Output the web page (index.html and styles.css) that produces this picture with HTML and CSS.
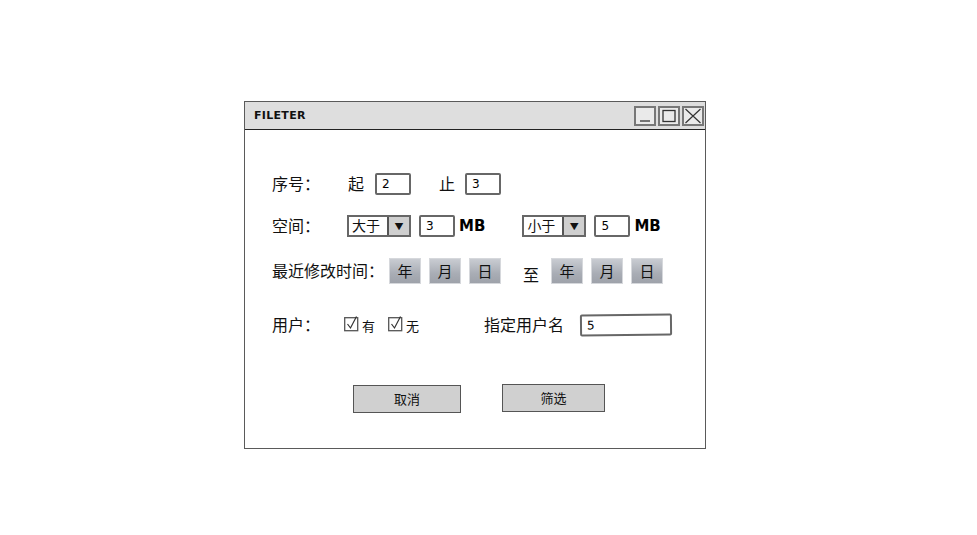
FILE: index.html
```html
<!DOCTYPE html>
<html lang="zh">
<head>
<meta charset="utf-8">
<title>FILETER</title>
<link rel="stylesheet" href="styles.css">
</head>
<body>
<div class="window">
  <div class="titlebar">
    <span class="title">FILETER</span>
    <div class="controls">
      <span class="ctl"><svg width="18" height="16" viewBox="0 0 18 16"><line x1="4" y1="13" x2="14" y2="13" stroke="#333" stroke-width="1.3"/></svg></span>
      <span class="ctl"><svg width="18" height="16" viewBox="0 0 18 16"><rect x="3" y="2.5" width="12" height="11" fill="none" stroke="#333" stroke-width="1.3"/></svg></span>
      <span class="ctl"><svg width="18" height="16" viewBox="0 0 18 16"><path d="M1.5 1 L16.5 15 M16.5 1 L1.5 15" stroke="#333" stroke-width="1.2" fill="none"/></svg></span>
    </div>
  </div>
  <div class="content">
    <div class="row row1">
      <span class="label w76">序号：</span>
      <span class="txt">起</span>
      <span class="input w36 ml11">2</span>
      <span class="txt ml28">止</span>
      <span class="input w36 ml10">3</span>
    </div>
    <div class="row row2">
      <span class="label w75">空间：</span>
      <span class="select"><span class="sel-text">大于</span><span class="sel-btn">▼</span></span>
      <span class="input w36 ml8">3</span>
      <span class="unit">MB</span>
      <span class="select ml37"><span class="sel-text">小于</span><span class="sel-btn">▼</span></span>
      <span class="input w36 ml8">5</span>
      <span class="unit">MB</span>
    </div>
    <div class="row row3">
      <span class="label w117">最近修改时间：</span>
      <span class="dbtn">年</span>
      <span class="dbtn">月</span>
      <span class="dbtn">日</span>
      <span class="txt to">至</span>
      <span class="dbtn ml12">年</span>
      <span class="dbtn">月</span>
      <span class="dbtn">日</span>
    </div>
    <div class="row row4">
      <span class="label w72">用户：</span>
      <span class="check"><svg width="17" height="17" viewBox="0 0 17 17"><rect x="0.7" y="2.7" width="13" height="13" fill="none" stroke="#555" stroke-width="1.3"/><path d="M3.5 9 L6.5 13 L12.5 1.5" fill="none" stroke="#333" stroke-width="1.2"/></svg><span class="small">有</span></span>
      <span class="check ml13"><svg width="17" height="17" viewBox="0 0 17 17"><rect x="0.7" y="2.7" width="13" height="13" fill="none" stroke="#555" stroke-width="1.3"/><path d="M3.5 9 L6.5 13 L12.5 1.5" fill="none" stroke="#333" stroke-width="1.2"/></svg><span class="small">无</span></span>
      <span class="txt ml65">指定用户名</span>
      <span class="input w92 ml16">5</span>
    </div>
    <div class="actions">
      <span class="btn cancel">取消</span>
      <span class="btn ok">筛选</span>
    </div>
  </div>
</div>
</body>
</html>
```
FILE: styles.css
```css
html, body {
  margin: 0;
  padding: 0;
  background: #fff;
}
body {
  width: 977px;
  height: 535px;
  font-family: "Noto Sans CJK SC", "DejaVu Sans", sans-serif;
  color: #111;
  overflow: hidden;
}
.window {
  margin: 101px 0 0 244px;
  width: 460px;
  height: 346px;
  border: 1px solid #5a5a5a;
  background: #fff;
}
.titlebar {
  height: 27px;
  background: #dedede;
  border-bottom: 1px solid #222;
  display: flex;
  align-items: center;
  padding-left: 9px;
}
.title {
  font-family: "DejaVu Sans", sans-serif;
  font-weight: bold;
  font-size: 11px;
  letter-spacing: 0.3px;
  color: #111;
}
.controls {
  margin-left: auto;
  margin-right: 1px;
  display: flex;
  gap: 2px;
}
.ctl {
  width: 22px;
  height: 20px;
  box-sizing: border-box;
  border: 2px solid #777;
  background: #eaeaea;
  display: flex;
  align-items: center;
  justify-content: center;
}
.content {
  padding: 43px 0 0 27px;
}
.row {
  display: flex;
  align-items: center;
  height: 22px;
  font-size: 16px;
  line-height: 1;
}
.label, .txt { padding-bottom: 3px; }
.row2 { margin-top: 20px; }
.row3 { margin-top: 21px; height: 26px; }
.row4 { margin-top: 30px; }
.label { flex: none; }
.w72 { width: 72px; }
.w75 { width: 75px; }
.w76 { width: 76px; }
.w117 { width: 117px; }
.ml8 { margin-left: 8px; }
.ml10 { margin-left: 10px; }
.ml11 { margin-left: 11px; }
.ml12 { margin-left: 12px; }
.ml13 { margin-left: 13px; }
.ml16 { margin-left: 16px; }
.ml28 { margin-left: 28px; }
.ml37 { margin-left: 37px; }
.ml65 { margin-left: 65px; }
.input {
  box-sizing: border-box;
  height: 22px;
  border: 2px solid #676767;
  border-radius: 2px;
  background: #fff;
  font-family: "DejaVu Sans", sans-serif;
  font-size: 12px;
  padding-left: 5px;
  display: flex;
  align-items: center;
  color: #000;
}
.w36 { width: 36px; }
.w92 { width: 92px; transform: rotate(-0.6deg); }
.unit {
  margin-left: 4px;
  font-family: "DejaVu Sans", sans-serif;
  font-weight: bold;
  font-size: 15px;
  color: #000;
}
.select {
  box-sizing: border-box;
  width: 64px;
  height: 22px;
  border: 2px solid #676767;
  display: flex;
  background: #fff;
}
.sel-text {
  flex: 1;
  font-size: 14px;
  padding: 0 0 2px 3px;
  display: flex;
  align-items: center;
}
.sel-btn {
  width: 20px;
  background: #cfcfcf;
  border-left: 2px solid #555;
  font-size: 9px;
  display: flex;
  align-items: center;
  justify-content: center;
  color: #111;
}
.dbtn {
  box-sizing: border-box;
  width: 32px;
  height: 26px;
  margin-right: 8px;
  padding-bottom: 2px;
  background: linear-gradient(#c9ccd2, #a9adb5 60%, #9ea2aa);
  border: 1px solid #d6d8dc;
  display: flex;
  align-items: center;
  justify-content: center;
  font-size: 15px;
  color: #111;
}
.to {
  margin-left: 14px;
  padding-bottom: 0;
  padding-top: 6px;
}
.check {
  display: flex;
  align-items: center;
}
.check svg { margin-top: -3px; }
.small {
  font-size: 13px;
  margin-left: 1px;
  margin-top: 1px;
}
.actions {
  display: flex;
  align-items: flex-start;
  margin: 48px 0 0 81px;
}
.btn {
  box-sizing: border-box;
  height: 28px;
  padding-bottom: 2px;
  background: #d0d0d0;
  border: 1.5px solid #555;
  font-size: 13px;
  display: flex;
  align-items: center;
  justify-content: center;
  color: #111;
}
.cancel { width: 108px; margin-top: 1px; }
.ok { width: 103px; margin-left: 41px; }
```
